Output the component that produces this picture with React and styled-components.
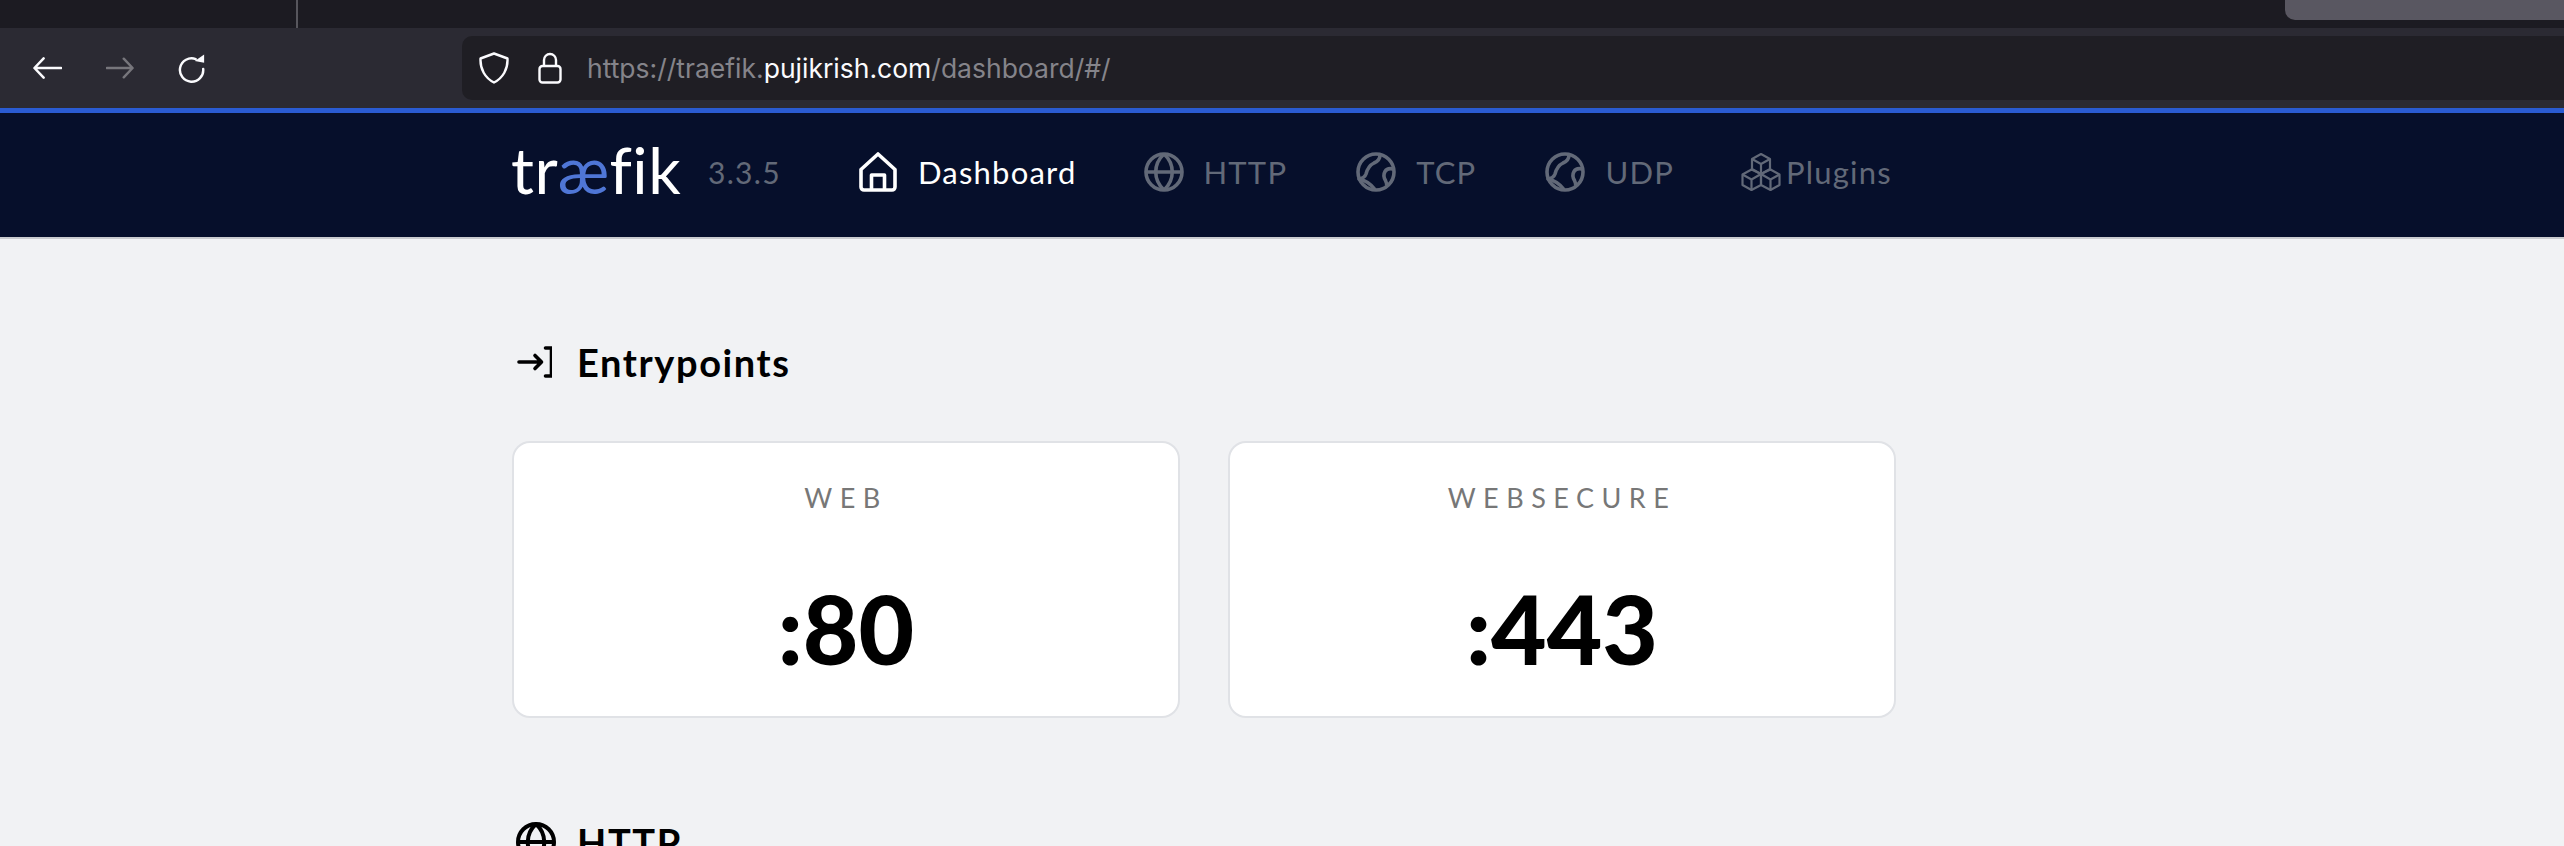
import React from "react";
import styled, { createGlobalStyle } from "styled-components";

const Global = createGlobalStyle`
  html, body { margin: 0; padding: 0; background: #f1f2f4; }
  body { font-family: "Lato", "Noto Sans", sans-serif; overflow: hidden; }
  #root { width: 2564px; height: 846px; overflow: hidden; }
`;

const TabStrip = styled.div`
  height: 28px;
  background: #1c1b22;
  display: flex;
  justify-content: space-between;
  align-items: flex-start;
  padding-left: 296px;
`;
const TabDivider = styled.div`
  width: 2px;
  height: 28px;
  background: #57565d;
`;
const ActiveTab = styled.div`
  width: 279px;
  height: 20px;
  background: #595761;
  border-bottom-left-radius: 10px;
`;
const Toolbar = styled.div`
  height: 80px;
  background: #2b2a33;
  display: flex;
  align-items: center;
  padding-left: 33px;
  box-sizing: border-box;
`;
const ToolButton = styled.svg`
  width: ${(p) => p.$w}px;
  height: 30px;
  margin-right: ${(p) => p.$gap}px;
  flex: none;
  color: ${(p) => (p.$dim ? "#77767c" : "#fbfbfe")};
`;
const AddressBar = styled.div`
  flex: 1;
  height: 64px;
  background: #1f1e24;
  border-radius: 10px 0 0 10px;
  display: flex;
  align-items: center;
  padding-left: 17px;
`;
const BarIcon = styled.svg`
  width: ${(p) => p.$w}px;
  height: 32px;
  margin-right: ${(p) => p.$gap}px;
  color: #fbfbfe;
  flex: none;
`;
const Url = styled.div`
  font-family: "Inter", sans-serif;
  font-size: 26.5px;
  color: #85848a;
  white-space: nowrap;
`;
const UrlHost = styled.span`
  color: #fbfbfe;
`;
const BlueLine = styled.div`
  height: 5px;
  background: #2a5bd2;
`;
const Nav = styled.nav`
  height: 126px;
  background: #060f2b;
  border-bottom: 2px solid #c9cbcf;
  box-sizing: border-box;
  display: flex;
  align-items: center;
  padding: 0 0 6px 511px;
`;
const Logo = styled.div`
  font-size: 64px;
  font-weight: 400;
  color: #fff;
  line-height: 1;
  width: 197px;
  letter-spacing: 0.5px;
  margin-top: -4px;
`;
const LogoAccent = styled.span`
  color: #4f76d6;
`;
const Version = styled.div`
  font-size: 30px;
  color: #626978;
  width: 151px;
  letter-spacing: 1.3px;
`;
const NavItem = styled.a`
  display: flex;
  align-items: center;
  gap: ${(p) => p.$gap ?? 20}px;
  font-size: 31px;
  letter-spacing: 1.2px;
  color: ${(p) => (p.$active ? "#fff" : "#626978")};
  margin-right: ${(p) => p.$mr ?? 0}px;
  text-decoration: none;
`;
const NavIcon = styled.svg`
  width: ${(p) => p.$w ?? 40}px;
  height: 40px;
  flex: none;
  display: block;
`;
const Main = styled.main`
  padding: 103px 0 0 512px;
`;
const SectionTitle = styled.h2`
  display: flex;
  align-items: center;
  gap: ${(p) => p.$gap ?? 25}px;
  margin: 0;
  height: 40px;
  font-size: 38px;
  font-weight: 700;
  letter-spacing: 1.6px;
  color: #000;
  line-height: 40px;
`;
const TitleIcon = styled.svg`
  width: 40px;
  height: 40px;
  flex: none;
  display: block;
  margin-left: ${(p) => p.$ml ?? 0}px;
`;
const Cards = styled.div`
  display: flex;
  gap: 48px;
  margin: 59px 0 104px;
`;
const Card = styled.div`
  width: 668px;
  height: 277px;
  box-sizing: border-box;
  background: #fff;
  border: 2px solid #e0e2e6;
  border-radius: 18px;
  display: flex;
  flex-direction: column;
  align-items: center;
  padding-top: 39px;
`;
const CardLabel = styled.div`
  font-size: 27px;
  letter-spacing: 7.5px;
  line-height: 32px;
  color: #777;
`;
const CardValue = styled.div`
  font-size: 96px;
  font-weight: 900;
  line-height: 96px;
  margin-top: 66px;
  color: #000;
`;

const Back = () => (
  <ToolButton $w={29} $gap={44} viewBox="0 0 30 24" fill="none" stroke="currentColor" strokeWidth="2.6" strokeLinecap="round" strokeLinejoin="round">
    <path d="M29 12H2M11 2 1.5 12 11 22" />
  </ToolButton>
);
const Forward = () => (
  <ToolButton $w={28} $gap={44} $dim viewBox="0 0 30 24" fill="none" stroke="currentColor" strokeWidth="2.6" strokeLinecap="round" strokeLinejoin="round">
    <path d="M1 12h27M19 2l9.500 10L19 22" />
  </ToolButton>
);
const Reload = () => (
  <ToolButton $w={28} $gap={256} viewBox="0 0 30 30" fill="none">
    <path d="M19 5.500A12.500 12.500 0 1 0 27 16" stroke="currentColor" strokeWidth="2.6" strokeLinecap="round" />
    <path d="M18 7.500 28 .5v9z" fill="currentColor" />
  </ToolButton>
);

const HomeIcon = () => (
  <NavIcon $w={38} viewBox="0 0 38 40" fill="none" stroke="#fff" strokeWidth="3.6" strokeLinejoin="round">
    <path d="M2 17.500 19 2l17 15.500V35a3 3 0 0 1-3 3H5a3 3 0 0 1-3-3z" />
    <path d="M12.500 38V23h13v15" />
  </NavIcon>
);
const GlobeLines = ({ color, width }) => (
  <g fill="none" stroke={color} strokeWidth={width}>
    <circle cx="20" cy="20" r="18" />
    <path d="M2 20h36M20 2c-11 10-11 26 0 36M20 2c11 10 11 26 0 36" />
  </g>
);
const GlobeIcon = () => (
  <NavIcon viewBox="0 0 40 40"><GlobeLines color="#626978" width="3.6" /></NavIcon>
);
const WorldIcon = () => (
  <NavIcon viewBox="0 0 40 40" fill="none" stroke="#626978" strokeWidth="3.6" strokeLinejoin="round">
    <circle cx="20" cy="20" r="18" />
    <path d="M24 3C24 7 21.500 9.500 18 11 14 13 11.500 16 10 22 9 25 6 26.500 3 27 8 28 14 31 19 37.500" />
    <path d="M37 17C33 16 30.500 17 29 19.500 27 23 28 26 29.500 28.500 30.500 30.500 31 32 30.500 34" />
  </NavIcon>
);
const PluginsIcon = () => (
  <NavIcon viewBox="0 0 40 40" fill="none" stroke="#626978" strokeWidth="2.200" strokeLinejoin="round">
    <path d="M20 2l9 5v10l-9 5-9-5V7z" />
    <path d="M11 7l9 5 9-5M20 12v10" />
    <path d="M10.500 17.500l9.500 4.500v11l-9.500 5-9-5V22.500z" />
    <path d="M1.500 22.500l9 5 9.500-5.500M10.500 27.500V38" />
    <path d="M29.500 17.500l9 5V33l-9 5-9.500-5V22z" />
    <path d="M20 22l9.500 5.500 9-5M29.500 27.500V38" />
  </NavIcon>
);
const EntryIcon = () => (
  <TitleIcon viewBox="0 0 40 40" fill="none" stroke="#000" strokeWidth="3.600" strokeLinecap="round" strokeLinejoin="round">
    <path d="M7 20h22M23 13.500l6.500 6.500-6.500 6.500" />
    <path d="M33.500 6H39.500V34H33.500" />
  </TitleIcon>
);

export default function App() {
  return (
    <>
      <Global />
      <TabStrip>
        <TabDivider />
        <ActiveTab />
      </TabStrip>
      <Toolbar>
        <Back />
        <Forward />
        <Reload />
        <AddressBar>
          <BarIcon $w={30} $gap={29} viewBox="0 0 30 32" fill="none" stroke="currentColor" strokeWidth="2.400" strokeLinejoin="round">
            <path d="M15 1.500 28.500 6.500C29 17 24 26 15 30.500 6 26 1 17 1.500 6.500z" />
          </BarIcon>
          <BarIcon $w={24} $gap={25} viewBox="0 0 24 32" fill="none" stroke="currentColor" strokeWidth="2.400" strokeLinejoin="round">
            <path d="M6 14V8a6 6 0 0 1 12 0v6" />
            <rect x="1.500" y="14" width="21" height="16.500" rx="3" />
          </BarIcon>
          <Url>https://traefik.<UrlHost>pujikrish.com</UrlHost>/dashboard/#/</Url>
        </AddressBar>
      </Toolbar>
      <BlueLine />
      <Nav>
        <Logo>tr<LogoAccent>æ</LogoAccent>fik</Logo>
        <Version>3.3.5</Version>
        <NavItem $active $gap={21} $mr={67}><HomeIcon />Dashboard</NavItem>
        <NavItem $mr={69}><GlobeIcon />HTTP</NavItem>
        <NavItem $mr={69}><WorldIcon />TCP</NavItem>
        <NavItem $mr={67}><WorldIcon />UDP</NavItem>
        <NavItem $gap={5}><PluginsIcon />Plugins</NavItem>
      </Nav>
      <Main>
        <SectionTitle><EntryIcon />Entrypoints</SectionTitle>
        <Cards>
          <Card>
            <CardLabel>WEB</CardLabel>
            <CardValue>:80</CardValue>
          </Card>
          <Card>
            <CardLabel>WEBSECURE</CardLabel>
            <CardValue>:443</CardValue>
          </Card>
        </Cards>
        <SectionTitle $gap={21}>
          <TitleIcon $ml={4} viewBox="0 0 40 40"><GlobeLines color="#000" width="4" /></TitleIcon>
          HTTP
        </SectionTitle>
      </Main>
    </>
  );
}
